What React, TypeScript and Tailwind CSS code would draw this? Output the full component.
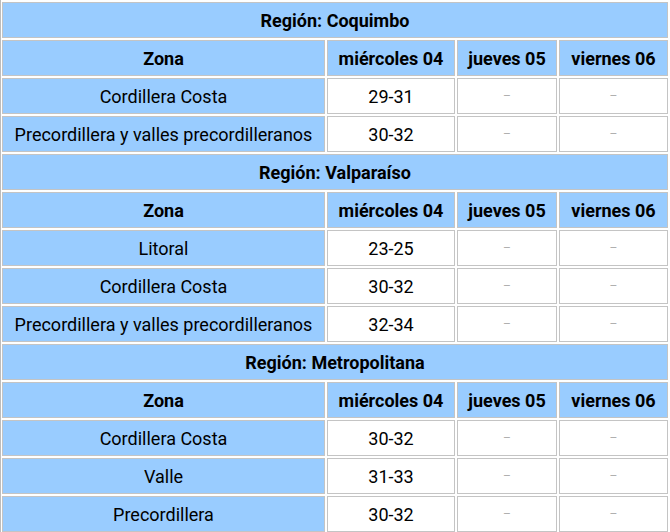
import React from 'react'

type Row = { zona: string; mie: string }
type Region = { name: string; rows: Row[] }

const REGIONS: Region[] = [
  {
    name: 'Coquimbo',
    rows: [
      { zona: 'Cordillera Costa', mie: '29-31' },
      { zona: 'Precordillera y valles precordilleranos', mie: '30-32' },
    ],
  },
  {
    name: 'Valparaíso',
    rows: [
      { zona: 'Litoral', mie: '23-25' },
      { zona: 'Cordillera Costa', mie: '30-32' },
      { zona: 'Precordillera y valles precordilleranos', mie: '32-34' },
    ],
  },
  {
    name: 'Metropolitana',
    rows: [
      { zona: 'Cordillera Costa', mie: '30-32' },
      { zona: 'Valle', mie: '31-33' },
      { zona: 'Precordillera', mie: '30-32' },
    ],
  },
]

const cell = 'h-[36px] border border-[#c4c4c4] p-0 text-center align-middle'
const blue = 'bg-[#99ccff]'

export default function App() {
  return (
    <div className="w-[670px] bg-white text-black font-['Roboto',sans-serif] text-[18px] shadow-[inset_1px_0_0_#bdbdbd]">
      <table className="w-[670px] table-fixed border-separate border-spacing-[2px]">
        <colgroup>
          <col className="w-[323px]" />
          <col className="w-[128px]" />
          <col className="w-[100px]" />
          <col />
        </colgroup>
        {REGIONS.map(r => (
          <tbody key={r.name}>
            <tr>
              <th colSpan={4} className={`${cell} ${blue} font-bold`}>Región: {r.name}</th>
            </tr>
            <tr>
              <th className={`${cell} ${blue} font-bold`}>Zona</th>
              <th className={`${cell} ${blue} font-bold`}>miércoles 04</th>
              <th className={`${cell} ${blue} font-bold`}>jueves 05</th>
              <th className={`${cell} ${blue} font-bold`}>viernes 06</th>
            </tr>
            {r.rows.map(row => (
              <tr key={row.zona}>
                <td className={`${cell} ${blue}`}>{row.zona}</td>
                <td className={`${cell} bg-white`}>{row.mie}</td>
                <td className={`${cell} bg-white text-[#b0b0b0] text-[12px]`}>–</td>
                <td className={`${cell} bg-white text-[#b0b0b0] text-[12px]`}>–</td>
              </tr>
            ))}
          </tbody>
        ))}
      </table>
    </div>
  )
}
